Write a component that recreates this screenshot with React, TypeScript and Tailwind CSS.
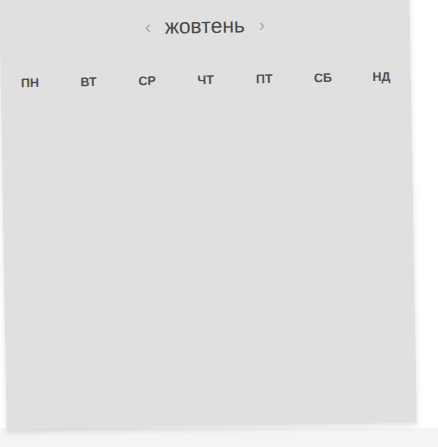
const days = ['пн', 'вт', 'ср', 'чт', 'пт', 'сб', 'нд'];

export default function App() {
  return (
    <div className="h-[447px] w-[438px] overflow-hidden bg-[linear-gradient(to_bottom,#ffffff_428px,#f4f4f4_428px)] font-['Liberation_Sans',Arial,sans-serif]">
      <div className="ml-[3px] mt-[-6px] h-[432px] w-[410px] origin-center -rotate-1 bg-[#e0e0e0] shadow-[0_3px_6px_rgba(0,0,0,0.12)]">
        <div className="flex items-center justify-center gap-[14px] pt-[21px]">
          <span className="text-[18px] leading-none text-[#a4a4a4]">‹</span>
          <span className="text-[21px] leading-none text-[#4a4a4a]">жовтень</span>
          <span className="text-[18px] leading-none text-[#a4a4a4]">›</span>
        </div>
        <div className="mt-[35px] grid grid-cols-7">
          {days.map((d) => (
            <div key={d} className="text-center text-[12.5px] font-bold uppercase text-[#505050]">
              {d}
            </div>
          ))}
        </div>
      </div>
    </div>
  );
}
